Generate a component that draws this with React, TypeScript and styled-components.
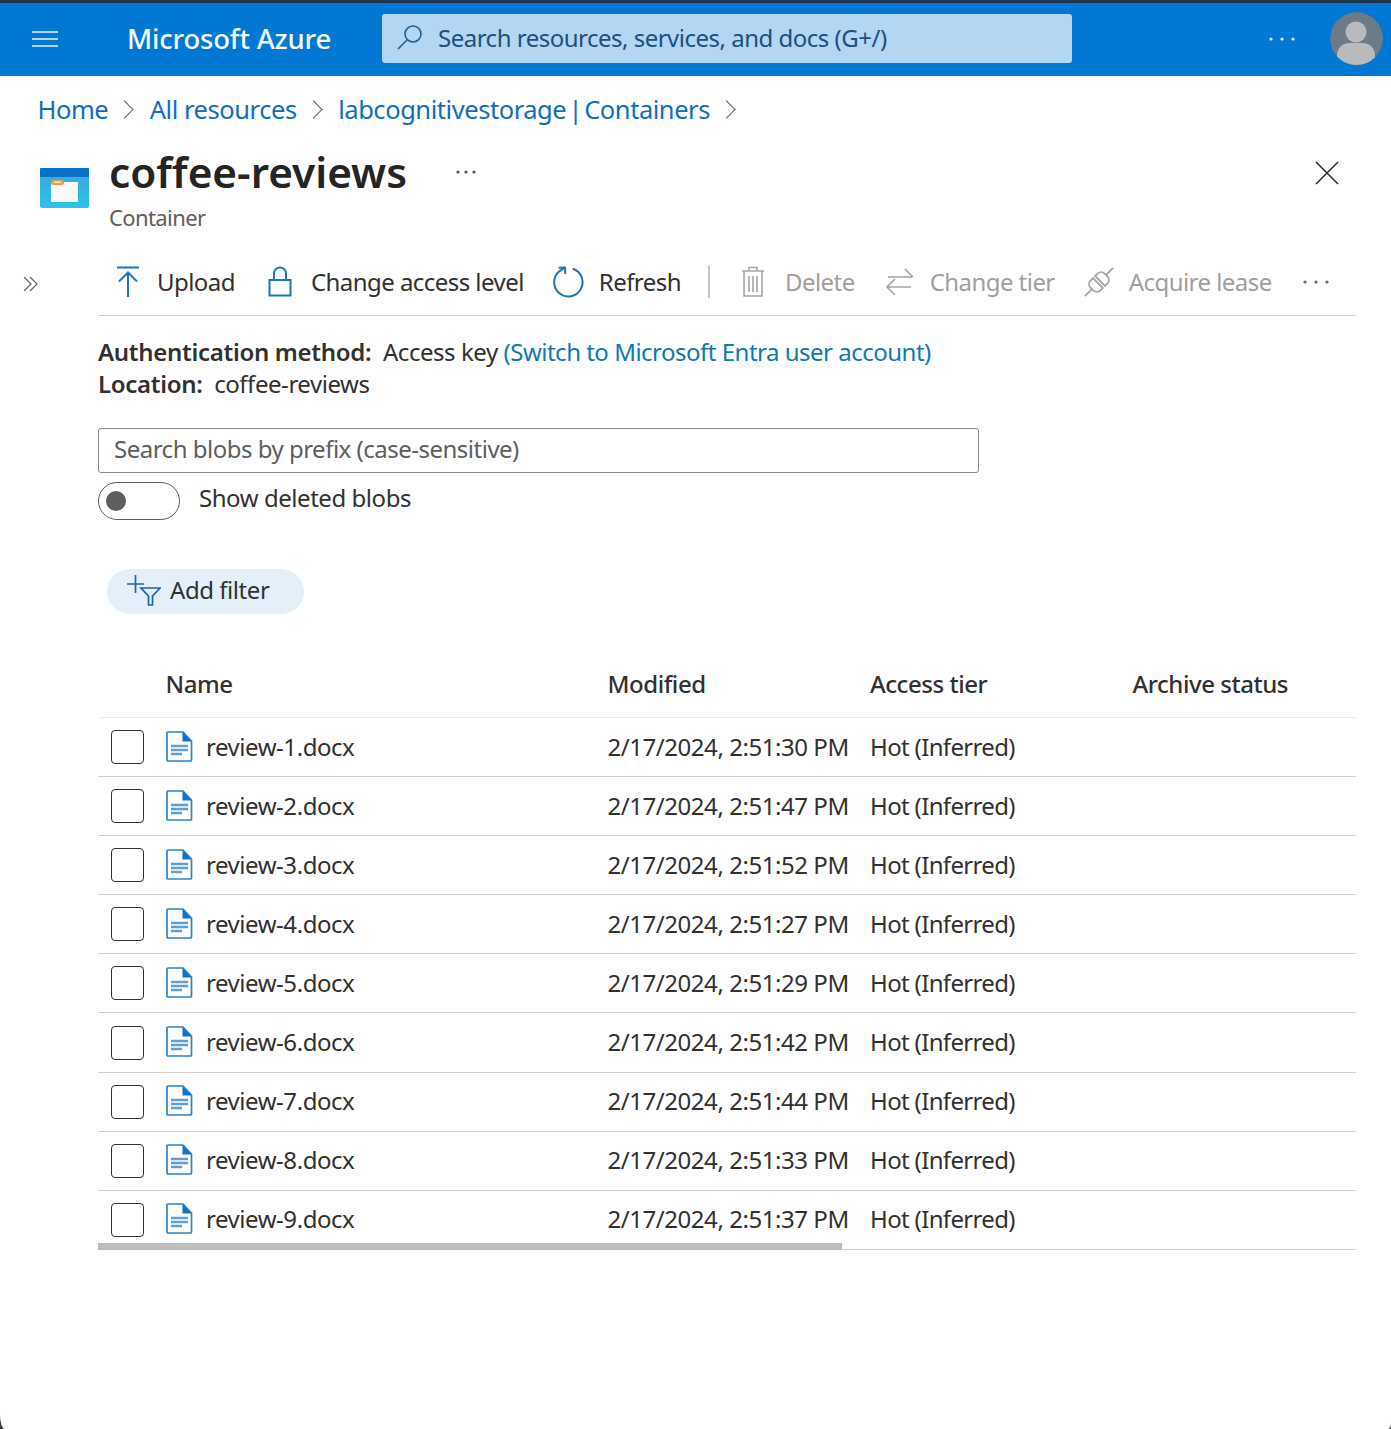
import React from 'react'
import styled, { createGlobalStyle } from 'styled-components'

const GlobalStyle = createGlobalStyle`
  html { background: #3a3a3a; }
  body { margin: 0; font-family: "Noto Sans", "Open Sans", sans-serif; color: #323130; }
`

const blobs = [
  ['review-1.docx', '2/17/2024, 2:51:30 PM'],
  ['review-2.docx', '2/17/2024, 2:51:47 PM'],
  ['review-3.docx', '2/17/2024, 2:51:52 PM'],
  ['review-4.docx', '2/17/2024, 2:51:27 PM'],
  ['review-5.docx', '2/17/2024, 2:51:29 PM'],
  ['review-6.docx', '2/17/2024, 2:51:42 PM'],
  ['review-7.docx', '2/17/2024, 2:51:44 PM'],
  ['review-8.docx', '2/17/2024, 2:51:33 PM'],
  ['review-9.docx', '2/17/2024, 2:51:37 PM'],
]

const Dots = ({ color, gap = 11 }: { color: string; gap?: number }) => (
  <svg width={gap * 2 + 4} height="4" viewBox={`0 0 ${gap * 2 + 4} 4`} fill={color}>
    <circle cx="2" cy="2" r="1.6" />
    <circle cx={gap + 2} cy="2" r="1.6" />
    <circle cx={gap * 2 + 2} cy="2" r="1.6" />
  </svg>
)

const DocIcon = () => (
  <svg width="27" height="31" viewBox="0 0 27 31">
    <path d="M2 1h15l8.500 9v19a1 1 0 0 1-1 1H2a1 1 0 0 1-1-1V2a1 1 0 0 1 1-1z" fill="#fff" stroke="#2a84d2" strokeWidth="1.700" />
    <path d="M16.500 1l9 9.500h-9z" fill="#1272c4" />
    <path d="M5 15h17M5 19h17M5 23h11" stroke="#5f9fd8" strokeWidth="2.300" />
  </svg>
)

const ContainerIcon = () => (
  <svg width="51" height="41" viewBox="0 0 51 41">
    <defs>
      <linearGradient id="cg" x1="0" y1="0" x2="0" y2="1">
        <stop offset="0" stopColor="#3da9dd" />
        <stop offset="1" stopColor="#2ac3ea" />
      </linearGradient>
    </defs>
    <path d="M1 8h49v31a2 2 0 0 1-2 2H3a2 2 0 0 1-2-2z" fill="url(#cg)" />
    <path d="M2 1h47a1 1 0 0 1 1 1v8H1V2a1 1 0 0 1 1-1z" fill="#0a72c6" />
    <rect x="12" y="15" width="27" height="20" fill="#fdfdf8" />
    <rect x="12" y="13" width="13" height="5" rx="2" fill="#e8a04a" />
    <rect x="15" y="14.500" width="7" height="1.500" fill="#fbe5c0" />
  </svg>
)

const tools = [
  {
    label: 'Upload', width: 41, after: 2, icon: (
      <svg width="24" height="32" viewBox="0 0 24 32" fill="none" stroke="#1c78b8" strokeWidth="2">
        <path d="M1 1.500h22M12 31V7M3 15.500l9-9 9 9" />
      </svg>
    ),
  },
  {
    label: 'Change access level', width: 43, after: -2, icon: (
      <svg width="24" height="31" viewBox="0 0 24 31" fill="none" stroke="#1c78b8" strokeWidth="2">
        <path d="M1.500 14h21v15.500h-21zM6 14V7.500a6 6 0 0 1 12 0V14" />
      </svg>
    ),
  },
  {
    label: 'Refresh', width: 46, after: -4, icon: (
      <svg width="32" height="32" viewBox="0 0 32 32" fill="none" stroke="#1c78b8" strokeWidth="2">
        <path d="M19.700 2.700A14.200 14.200 0 1 1 6.300 5.300L12 1.500M5.500 1.800l6.500-.3.300 6.500" />
      </svg>
    ),
  },
  {
    label: 'Delete', width: 44, after: 0, disabled: true, separated: true, icon: (
      <svg width="24" height="31" viewBox="0 0 24 31" fill="none" stroke="#a6a6a6" strokeWidth="1.600">
        <path d="M1 5h22M8 5V1.500h8V5M3 5v25h18V5M8 10v16M12 10v16M16 10v16" />
      </svg>
    ),
  },
  {
    label: 'Change tier', width: 44, after: -2, disabled: true, icon: (
      <svg width="28" height="30" viewBox="0 0 28 30" fill="none" stroke="#a6a6a6" strokeWidth="1.600">
        <path d="M2 10h24M19 2l8 8M1 20h24M9 12l-8 8 8 8" />
      </svg>
    ),
  },
  {
    label: 'Acquire lease', width: 45, after: 0, disabled: true, icon: (
      <svg width="30" height="30" viewBox="0 0 30 30" fill="none" stroke="#a6a6a6" strokeWidth="1.800">
        <g transform="rotate(45 15 15)">
          <path d="M15 -5V5M15 25V35" />
          <path d="M8 13.500V10a5 5 0 0 1 5-5h4a5 5 0 0 1 5 5v3.500z" />
          <path d="M8 16.500h14V20a5 5 0 0 1-5 5h-4a5 5 0 0 1-5-5z" />
        </g>
      </svg>
    ),
  },
]

export default function App() {
  return (
    <Page>
      <GlobalStyle />
      <TopBar>
        <Burger>
          <svg width="26" height="18" viewBox="0 0 26 18" stroke="#eaf4fc" strokeWidth="1.600">
            <path d="M0 2h26M0 9h26M0 16h26" />
          </svg>
        </Burger>
        <Brand>Microsoft Azure</Brand>
        <SearchBar>
          <svg width="26" height="26" viewBox="0 0 26 26" fill="none" stroke="#1f5f98" strokeWidth="1.600">
            <circle cx="16" cy="10" r="8" />
            <path d="M10 16L1 25" />
          </svg>
          <SearchText>Search resources, services, and docs (G+/)</SearchText>
        </SearchBar>
        <TopDots>
          <Dots color="#e8f4fd" />
        </TopDots>
        <Avatar>
          <svg width="53" height="53" viewBox="0 0 53 53">
            <circle cx="26.500" cy="26.500" r="26.500" fill="#6c7a8a" />
            <circle cx="26" cy="20" r="10.500" fill="#b8babd" />
            <path d="M7 53V44c0-9 6-13 13-13h12c7 0 13 4 13 13v9z" fill="#b8babd" />
          </svg>
        </Avatar>
      </TopBar>

      <Crumbs>
        <CrumbLink>Home</CrumbLink>
        <Chevron />
        <CrumbLink>All resources</CrumbLink>
        <Chevron />
        <CrumbLink $tight>labcognitivestorage | Containers</CrumbLink>
        <Chevron />
      </Crumbs>

      <TitleRow>
        <TitleIcon>
          <ContainerIcon />
        </TitleIcon>
        <TitleBlock>
          <TitleLine>
            <Title>coffee-reviews</Title>
            <Dots color="#555" gap={8} />
          </TitleLine>
          <Subtitle>Container</Subtitle>
        </TitleBlock>
        <CloseIcon viewBox="0 0 24 24" stroke="#2b2b2b" strokeWidth="1.500">
          <path d="M1 1l22 22M23 1L1 23" />
        </CloseIcon>
      </TitleRow>

      <Body>
        <Expander>
          <svg width="16" height="16" viewBox="0 0 16 16" fill="none" stroke="#666" strokeWidth="1.200">
            <path d="M1 1l7 7-7 7M7 1l7 7-7 7" />
          </svg>
        </Expander>
        <Main>
          <Toolbar>
            {tools.map((t) => (
              <React.Fragment key={t.label}>
                {t.separated && <ToolSep />}
                <ToolItem $disabled={t.disabled} $after={t.after}>
                  <ToolIcon $w={t.width}>{t.icon}</ToolIcon>
                  {t.label}
                </ToolItem>
              </React.Fragment>
            ))}
            <Dots color="#666" gap={11} />
          </Toolbar>

          <Info>
            <div>
              <b>Authentication method:</b>&nbsp; Access key <InfoLink>(Switch to Microsoft Entra user account)</InfoLink>
            </div>
            <div>
              <b>Location:</b>&nbsp; coffee-reviews
            </div>
          </Info>

          <PrefixInput>Search blobs by prefix (case-sensitive)</PrefixInput>

          <ToggleRow>
            <Toggle>
              <Knob />
            </Toggle>
            <ToggleLabel>Show deleted blobs</ToggleLabel>
          </ToggleRow>

          <FilterPill>
            <svg width="34" height="32" viewBox="0 0 34 32" fill="none" stroke="#1a64b4" strokeWidth="1.700">
              <path d="M0 10h17M8.500 1v18" />
              <path d="M14 14h19l-7.500 8v9h-4v-9z" />
            </svg>
            Add filter
          </FilterPill>

          <Table>
            <HeaderRow>
              <NameHead>Name</NameHead>
              <span>Modified</span>
              <span>Access tier</span>
              <span>Archive status</span>
            </HeaderRow>
            {blobs.map(([name, modified]) => (
              <Row key={name}>
                <NameCell>
                  <Check />
                  <DocIcon />
                  <span>{name}</span>
                </NameCell>
                <span>{modified}</span>
                <TierCell>Hot (Inferred)</TierCell>
                <span />
              </Row>
            ))}
            <ScrollThumb />
          </Table>
        </Main>
      </Body>
    </Page>
  )
}

const Page = styled.div`
  width: 1391px;
  height: 1429px;
  background: #fff;
  border-radius: 0 0 3px 5px / 0 0 6px 14px;
  overflow: hidden;
  font-size: 24px;
  letter-spacing: -0.45px;
`
const TopBar = styled.div`
  display: flex;
  align-items: center;
  box-sizing: border-box;
  height: 76px;
  padding-bottom: 2px;
  background: #0078d4;
  border-top: 3px solid #1d3350;
  color: #fff;
`
const Burger = styled.div`
  display: flex;
  margin-left: 32px;
  width: 95px;
`
const Brand = styled.div`
  width: 255px;
  font-size: 27.500px;
  font-weight: 500;
  letter-spacing: -0.2px;
  color: #f4fafe;
`
const SearchBar = styled.div`
  display: flex;
  align-items: center;
  gap: 15px;
  box-sizing: border-box;
  width: 690px;
  height: 49px;
  padding: 0 0 3px 15px;
  background: #b3d6f2;
  border-radius: 3px;
`
const SearchText = styled.span`
  font-size: 24px;
  letter-spacing: -0.5px;
  color: #1d4f80;
`
const TopDots = styled.div`
  display: flex;
  margin-left: 197px;
  width: 61px;
`
const Avatar = styled.div`
  display: flex;
  border-radius: 50%;
  overflow: hidden;
`
const Crumbs = styled.div`
  display: flex;
  align-items: center;
  height: 34px;
  margin-top: 16px;
  padding-left: 37.500px;
  font-size: 25.500px;
`
const CrumbLink = styled.span<{ $tight?: boolean }>`
  color: #106ebe;
  word-spacing: ${(p) => (p.$tight ? '-4px' : '0')};
`
const Chevron = styled.i`
  display: block;
  width: 12px;
  height: 12px;
  margin: 0 18.500px 0 10px;
  border-top: 1.500px solid #605e5c;
  border-right: 1.500px solid #605e5c;
  transform: rotate(45deg);
`
const TitleRow = styled.div`
  display: flex;
  align-items: flex-start;
  margin-top: 18px;
  padding: 0 52px 0 38.500px;
`
const TitleIcon = styled.div`
  display: flex;
  width: 70.500px;
  margin-top: 23px;
`
const TitleBlock = styled.div`
  flex: 1;
`
const TitleLine = styled.div`
  display: flex;
  align-items: center;
  gap: 49px;
`
const Title = styled.h1`
  margin: 0;
  font-size: 42.300px;
  line-height: 56px;
  font-weight: 600;
  letter-spacing: 0;
  color: #252423;
`
const Subtitle = styled.div`
  margin-top: 2px;
  font-size: 22px;
  line-height: 30px;
  letter-spacing: -0.6px;
  color: #605e5c;
`
const CloseIcon = styled.svg`
  width: 24px;
  height: 24px;
  margin-top: 17px;
  fill: none;
`
const Body = styled.div`
  display: flex;
  margin-top: 18px;
  padding-right: 35px;
`
const Expander = styled.div`
  display: flex;
  width: 98px;
  padding: 26px 0 0 23px;
  box-sizing: border-box;
`
const Main = styled.div`
  flex: 1;
  min-width: 0;
`
const Toolbar = styled.div`
  display: flex;
  align-items: center;
  gap: 31px;
  height: 63px;
  padding: 0 0 2px 18px;
  border-bottom: 1.500px solid #d2d0ce;
`
const ToolItem = styled.div<{ $disabled?: boolean; $after: number }>`
  display: flex;
  align-items: center;
  flex-shrink: 0;
  white-space: nowrap;
  letter-spacing: -0.55px;
  margin-right: ${(p) => p.$after}px;
  color: ${(p) => (p.$disabled ? '#a19f9d' : '#323130')};
`
const ToolIcon = styled.span<{ $w: number }>`
  display: flex;
  width: ${(p) => p.$w}px;
`
const ToolSep = styled.i`
  display: block;
  width: 2px;
  height: 32px;
  background: #c8c6c4;
`
const Info = styled.div`
  margin-top: 20px;
  line-height: 32px;
  b {
    font-weight: 600;
    letter-spacing: -0.3px;
  }
`
const InfoLink = styled.span`
  letter-spacing: -0.5px;
  color: #0f78b8;
`
const PrefixInput = styled.div`
  display: flex;
  align-items: center;
  box-sizing: border-box;
  width: 881px;
  height: 45px;
  margin-top: 28px;
  padding: 0 0 4px 15px;
  border: 1px solid #8a8886;
  border-radius: 3px;
  letter-spacing: -0.5px;
  color: #605e5c;
`
const ToggleRow = styled.div`
  display: flex;
  align-items: flex-start;
  gap: 19px;
  margin-top: 9px;
`
const Toggle = styled.div`
  display: flex;
  align-items: center;
  box-sizing: border-box;
  width: 82px;
  height: 38px;
  padding-left: 7px;
  border: 1px solid #605e5c;
  border-radius: 19px;
`
const ToggleLabel = styled.span`
  line-height: 32px;
`
const Knob = styled.i`
  display: block;
  width: 20px;
  height: 20px;
  border-radius: 50%;
  background: #605e5c;
`
const FilterPill = styled.div`
  display: flex;
  align-items: center;
  gap: 9px;
  box-sizing: border-box;
  width: 197px;
  height: 45px;
  margin: 49px 0 0 9px;
  padding: 0 0 4px 20px;
  border-radius: 23px;
  background: #e3f0fa;
`
const Table = styled.div`
  position: relative;
  margin-top: 41px;
`
const HeaderRow = styled.div`
  display: grid;
  grid-template-columns: 509.500px 262.500px 262.500px 1fr;
  align-items: center;
  box-sizing: border-box;
  height: 63px;
  padding-bottom: 5px;
  font-weight: 500;
  border-bottom: 1.500px solid #edebe9;
`
const NameHead = styled.span`
  padding-left: 67.500px;
`
const Row = styled.div`
  display: grid;
  grid-template-columns: 509.500px 262.500px 262.500px 1fr;
  align-items: center;
  box-sizing: border-box;
  height: 59.100px;
  padding-bottom: 2px;
  border-bottom: 1.500px solid #d2d0ce;
`
const NameCell = styled.div`
  display: flex;
  align-items: center;
  padding-left: 13px;
  gap: 22px;
  span {
    margin-left: -9px;
  }
`
const TierCell = styled.span`
  letter-spacing: -0.65px;
`
const Check = styled.i`
  display: block;
  box-sizing: border-box;
  width: 33px;
  height: 34px;
  margin-top: 2px;
  border: 1.300px solid #323130;
  border-radius: 4px;
`
const ScrollThumb = styled.div`
  position: absolute;
  left: 0;
  bottom: 0;
  width: 744px;
  height: 7px;
  background: #bdbdbd;
`
